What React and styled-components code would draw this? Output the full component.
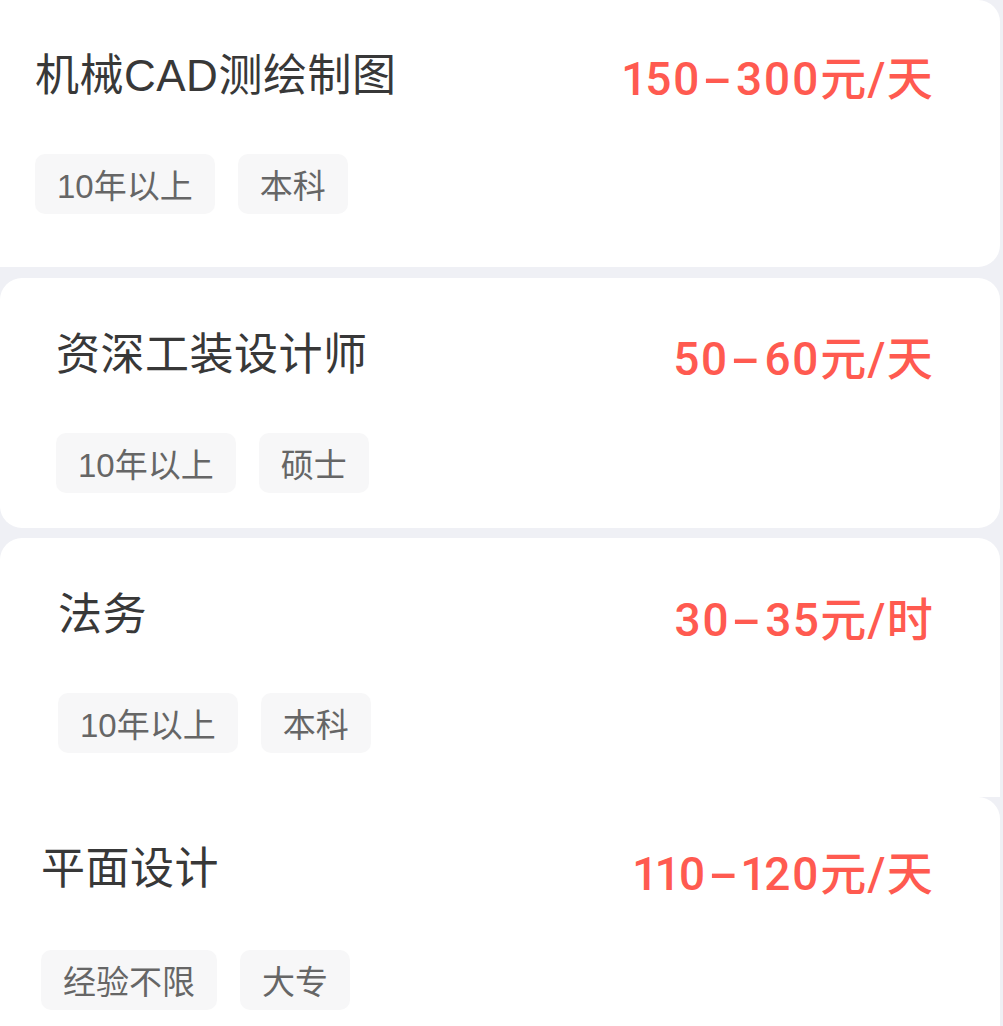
import React from "react";
import styled, { createGlobalStyle } from "styled-components";

const GlobalStyle = createGlobalStyle`
  html, body {
    margin: 0;
    padding: 0;
    background: #eff0f5;
  }
  body {
    font-family: "Liberation Sans", "Noto Sans CJK SC", sans-serif;
    -webkit-font-smoothing: antialiased;
  }
`;

const List = styled.div`
  display: flex;
  flex-direction: column;
  width: 1003px;
  min-height: 1026px;
`;

const Card = styled.div`
  box-sizing: border-box;
  margin-right: 3px;
  margin-bottom: ${(p) => p.$gap}px;
  padding: ${(p) => p.$top}px 66px ${(p) => p.$bottom}px ${(p) => p.$inset}px;
  background: #ffffff;
  border-radius: ${(p) => p.$radius};
  display: flex;
  flex-direction: column;
  gap: ${(p) => p.$rowGap}px;
`;

const HeadRow = styled.div`
  display: flex;
  align-items: center;
  justify-content: space-between;
  height: 56px;
`;

const Title = styled.div`
  font-family: "Liberation Sans", "Noto Sans CJK SC", sans-serif;
  font-size: 44px;
  line-height: 56px;
  color: #383838;
  white-space: nowrap;
  letter-spacing: 0.5px;
`;

const Price = styled.div`
  font-family: Roboto, "Noto Sans CJK SC", sans-serif;
  font-weight: 500;
  font-size: 46px;
  line-height: 56px;
  letter-spacing: 1.3px;
  font-variant-numeric: proportional-nums;
  color: #ff5a50;
  white-space: nowrap;
  transform: translateY(${(p) => p.$shift}px);
`;

const Dash = styled.span`
  display: inline-block;
  margin: 0 9px;
  transform: scaleX(1.9);
`;

const Tags = styled.div`
  display: flex;
  gap: 23px;
`;

const Tag = styled.span`
  height: 60px;
  box-sizing: border-box;
  padding: 0 22px;
  display: inline-flex;
  align-items: center;
  border-radius: 10px;
  background: #f7f7f8;
  color: #666666;
  font-family: "Liberation Sans", "Noto Sans CJK SC", sans-serif;
  font-size: 33px;
  white-space: nowrap;
`;

const jobs = [
  {
    title: "机械CAD测绘制图",
    low: "150",
    high: "300",
    unit: "天",
    tags: ["10年以上", "本科"],
    inset: 35,
    top: 48,
    bottom: 53,
    gap: 11,
    rowGap: 50,
    radius: "0 22px 22px 0",
    shift: 3,
  },
  {
    title: "资深工装设计师",
    low: "50",
    high: "60",
    unit: "天",
    tags: ["10年以上", "硕士"],
    inset: 56,
    top: 49,
    bottom: 35,
    gap: 10,
    rowGap: 50,
    radius: "22px",
    shift: 4,
  },
  {
    title: "法务",
    low: "30",
    high: "35",
    unit: "时",
    tags: ["10年以上", "本科"],
    inset: 58,
    top: 49,
    bottom: 44,
    gap: 0,
    rowGap: 50,
    radius: "22px 22px 0 0",
    shift: 5,
  },
  {
    title: "平面设计",
    low: "110",
    high: "120",
    unit: "天",
    tags: ["经验不限", "大专"],
    inset: 41,
    top: 44,
    bottom: 40,
    gap: 0,
    rowGap: 53,
    radius: "0 22px 0 0",
    shift: 5,
  },
];

export default function App() {
  return (
    <>
      <GlobalStyle />
      <List>
        {jobs.map((j) => (
          <Card
            key={j.title}
            $inset={j.inset}
            $top={j.top}
            $bottom={j.bottom}
            $gap={j.gap}
            $rowGap={j.rowGap}
            $radius={j.radius}
          >
            <HeadRow>
              <Title>{j.title}</Title>
              <Price $shift={j.shift}>
                {j.low}
                <Dash>-</Dash>
                {j.high}元/{j.unit}
              </Price>
            </HeadRow>
            <Tags>
              {j.tags.map((t) => (
                <Tag key={t}>{t}</Tag>
              ))}
            </Tags>
          </Card>
        ))}
      </List>
    </>
  );
}
